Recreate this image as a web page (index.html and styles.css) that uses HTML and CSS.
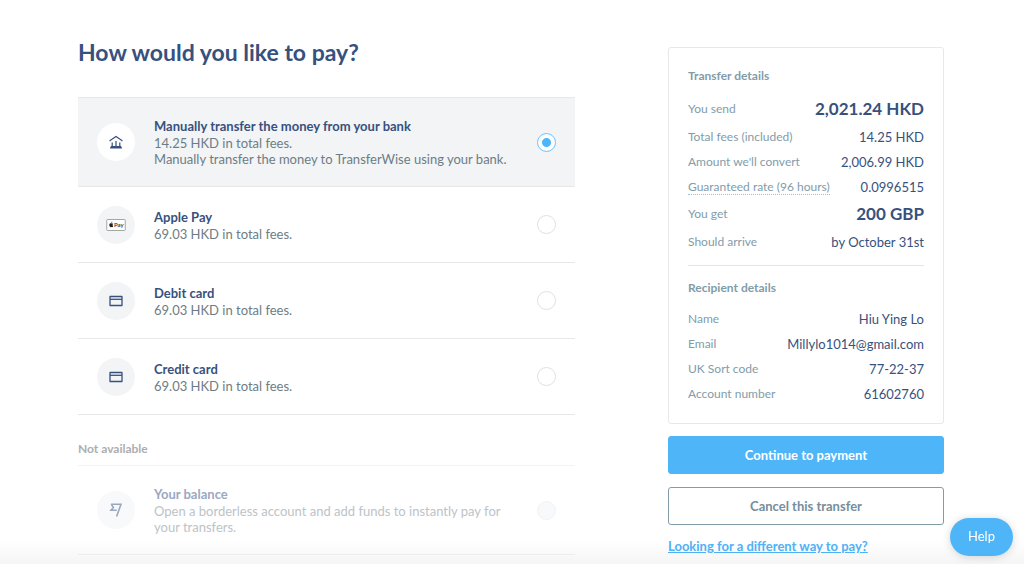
FILE: index.html
```html
<!DOCTYPE html>
<html lang="en">
<head>
<meta charset="utf-8">
<meta name="viewport" content="width=device-width, initial-scale=1">
<title>How would you like to pay?</title>
<link rel="stylesheet" href="styles.css">
</head>
<body>
<div class="page">
  <main class="payment">
    <h1 class="payment-title" id="pay-title">How would you like to pay?</h1>
    <div class="options" role="radiogroup" aria-labelledby="pay-title">
      <label class="option option-tall option-selected">
        <span class="option-icon">
          <svg width="14" height="14" viewBox="0 0 14 14" fill="none" stroke="currentColor" stroke-width="1.2"><path d="M1 6.200V5.600L7 1.400l6 4.200V6.200M1 12.800h12M1.800 11.600h10.400M3.200 12V7.600M7 12V6M10.800 12V7.600"/></svg>
        </span>
        <span class="option-text">
          <span class="option-name">Manually transfer the money from your bank</span>
          <span class="option-info">14.25 HKD in total fees.<br>Manually transfer the money to TransferWise using your bank.</span>
        </span>
        <input class="option-radio" type="radio" name="method" checked>
      </label>
      <label class="option">
        <span class="option-icon">
          <svg width="20" height="12" viewBox="0 0 20 12"><rect x=".75" y=".5" width="18.5" height="11" rx=".6" fill="#fff" stroke="#a6a6a6"/><path d="M6.500 4.400c-.5-.3-.9 0-1.200 0-.4 0-.8-.3-1.300 0-1 .5-.9 2.300.1 3.600.5.500.7.1 1.200.1s.7.400 1.200 0c.3-.3.6-.7.7-1.200-.9-.5-.9-1.500-.1-2-.2-.3-.4-.4-.6-.5zM5.300 3.900c0-.7.4-1.200 1-1.300 0 .7-.4 1.200-1 1.300z" fill="#222"/><text class="apple-word" x="8" y="8">Pay</text></svg>
        </span>
        <span class="option-text">
          <span class="option-name">Apple Pay</span>
          <span class="option-info">69.03 HKD in total fees.</span>
        </span>
        <input class="option-radio" type="radio" name="method">
      </label>
      <label class="option">
        <span class="option-icon">
          <svg width="14" height="12" viewBox="0 0 14 12" fill="none" stroke="currentColor" stroke-width="1.300"><rect x="1" y="1.500" width="12" height="9" rx=".2"/><path d="M1 4.300h12"/></svg>
        </span>
        <span class="option-text">
          <span class="option-name">Debit card</span>
          <span class="option-info">69.03 HKD in total fees.</span>
        </span>
        <input class="option-radio" type="radio" name="method">
      </label>
      <label class="option">
        <span class="option-icon">
          <svg width="14" height="12" viewBox="0 0 14 12" fill="none" stroke="currentColor" stroke-width="1.300"><rect x="1" y="1.500" width="12" height="9" rx=".2"/><path d="M1 4.300h12"/></svg>
        </span>
        <span class="option-text">
          <span class="option-name">Credit card</span>
          <span class="option-info">69.03 HKD in total fees.</span>
        </span>
        <input class="option-radio" type="radio" name="method">
      </label>
    </div>
    <section class="unavailable">
      <h2 class="unavailable-title">Not available</h2>
      <div class="options">
        <label class="option option-tall option-disabled">
          <span class="option-icon">
            <svg width="14" height="14" viewBox="0 0 14 14" fill="none" stroke="currentColor" stroke-width="1.600"><path d="M2 1.200h10L7.600 13.500M2.200 1.200l2.200 3.200L2 7.300h5.800"/></svg>
          </span>
          <span class="option-text">
            <span class="option-name">Your balance</span>
            <span class="option-info">Open a borderless account and add funds to instantly pay for your transfers.</span>
          </span>
          <input class="option-radio" type="radio" name="method" disabled>
        </label>
      </div>
    </section>
  </main>
  <aside class="summary">
    <div class="card">
      <h2 class="card-title">Transfer details</h2>
      <dl class="rows">
        <div class="row row-big"><dt>You send</dt><dd>2,021.24 HKD</dd></div>
        <div class="row"><dt>Total fees (included)</dt><dd>14.25 HKD</dd></div>
        <div class="row"><dt>Amount we'll convert</dt><dd>2,006.99 HKD</dd></div>
        <div class="row"><dt><span class="hint">Guaranteed rate (96 hours)</span></dt><dd>0.0996515</dd></div>
        <div class="row row-big"><dt>You get</dt><dd>200 GBP</dd></div>
        <div class="row"><dt>Should arrive</dt><dd>by October 31st</dd></div>
      </dl>
      <hr class="divider">
      <h2 class="card-title">Recipient details</h2>
      <dl class="rows">
        <div class="row"><dt>Name</dt><dd>Hiu Ying Lo</dd></div>
        <div class="row"><dt>Email</dt><dd>Millylo1014@gmail.com</dd></div>
        <div class="row"><dt>UK Sort code</dt><dd>77-22-37</dd></div>
        <div class="row"><dt>Account number</dt><dd>61602760</dd></div>
      </dl>
    </div>
    <button class="button button-primary" type="button">Continue to payment</button>
    <button class="button button-outline" type="button">Cancel this transfer</button>
    <a class="other-way" href="#">Looking for a different way to pay?</a>
  </aside>
</div>
<div class="fade"></div>
<button class="help" type="button">Help</button>
</body>
</html>
```
FILE: styles.css
```css
* { box-sizing: border-box; }

body {
  margin: 0;
  background: #fff;
  color: #37517e;
  font-family: Lato, "Open Sans", sans-serif;
  font-size: 13px;
  line-height: 16px;
}

h1, h2, dl, dd { margin: 0; }

.page {
  display: grid;
  grid-template-columns: minmax(0, 1fr) 276px;
  column-gap: 93px;
  align-items: start;
  padding: 37px 80px 0 78px;
}

.payment-title {
  margin-bottom: 30px;
  font-size: 23px;
  line-height: 30px;
  font-weight: 700;
}

.options { border-top: 1px solid #e6e8e9; }

.option {
  display: flex;
  align-items: center;
  min-height: 76px;
  padding: 18px 19px;
  border-bottom: 1px solid #e6e8e9;
}

.option-tall { min-height: 89px; }

.option-selected { background: #f2f4f6; }

.option-icon {
  display: flex;
  flex: none;
  align-items: center;
  justify-content: center;
  width: 38px;
  height: 38px;
  margin-right: 19px;
  border-radius: 50%;
  background: #f2f4f6;
}

.option-selected .option-icon { background: #fff; }

.apple-word { font-size: 6px; font-weight: 700; fill: #444; }

.option-text { flex: 1; padding-right: 24px; }

.option-name {
  display: block;
  line-height: 18px;
  font-weight: 700;
}

.option-info { display: block; color: #6d7d85; }

.option-radio {
  appearance: none;
  flex: none;
  width: 19px;
  height: 19px;
  margin: 0;
  border: 1px solid #dfe1e2;
  border-radius: 50%;
  background: #fff;
}

.option-radio:checked {
  border-color: #6fc3fb;
  background: radial-gradient(circle, #4fb5f9 4px, #fff 5px);
}

.unavailable { margin-top: 26px; }

.unavailable-title {
  margin-bottom: 8px;
  color: #abaeb0;
  font-size: 12px;
  line-height: 16px;
}

.unavailable .options,
.option-disabled { border-color: #f2f3f4; }

.option-disabled .option-icon { background: #f8f9fb; color: #9ba8bf; }
.option-disabled .option-name { color: #9ba8bf; }
.option-disabled .option-info { color: #bcc3c7; }
.option-disabled .option-radio { border-color: #f2f3f4; background: #f8f9fb; }

.summary {
  display: flex;
  flex-direction: column;
  padding-top: 10px;
}

.card {
  margin-bottom: 12px;
  padding: 19px 19px 17px;
  border: 1px solid #e6e8e9;
  border-radius: 3px;
}

.card-title {
  margin-bottom: 9px;
  color: #829ca9;
  font-size: 12px;
  line-height: 18px;
}

.row {
  display: flex;
  align-items: center;
  justify-content: space-between;
  min-height: 25px;
}

.row-big { min-height: 30px; }
.row dt { color: #829ca9; font-size: 12px; }
.row dd { font-size: 13px; }
.row-big dd { font-size: 17px; font-weight: 700; }

.hint { border-bottom: 1px dotted #7cc8f8; }

.divider {
  margin: 11px 0 13px;
  border: 0;
  border-top: 1px solid #e2e6e8;
}

.button {
  height: 38px;
  margin-bottom: 13px;
  border: 1px solid #4fb5f9;
  border-radius: 3px;
  font: 700 13px/16px Lato, "Open Sans", sans-serif;
}

.button-primary { background: #4fb5f9; color: #fff; }
.button-outline { border-color: #829ca9; background: #fff; color: #768e9c; }

.other-way {
  align-self: flex-start;
  color: #4fb5f9;
  font-weight: 700;
}

.fade {
  position: fixed;
  inset: auto 0 0;
  height: 24px;
  background: linear-gradient(rgba(0, 0, 0, 0), rgba(0, 0, 0, 0.04));
  pointer-events: none;
}

.help {
  position: fixed;
  right: 11px;
  bottom: 8px;
  width: 63px;
  height: 38px;
  padding: 0 0 3px;
  border: 0;
  border-radius: 19px;
  background: #4fb5f9;
  box-shadow: 0 1px 8px rgba(0, 0, 0, 0.16);
  color: #fff;
  font: 13px/16px Lato, "Open Sans", sans-serif;
}
```
